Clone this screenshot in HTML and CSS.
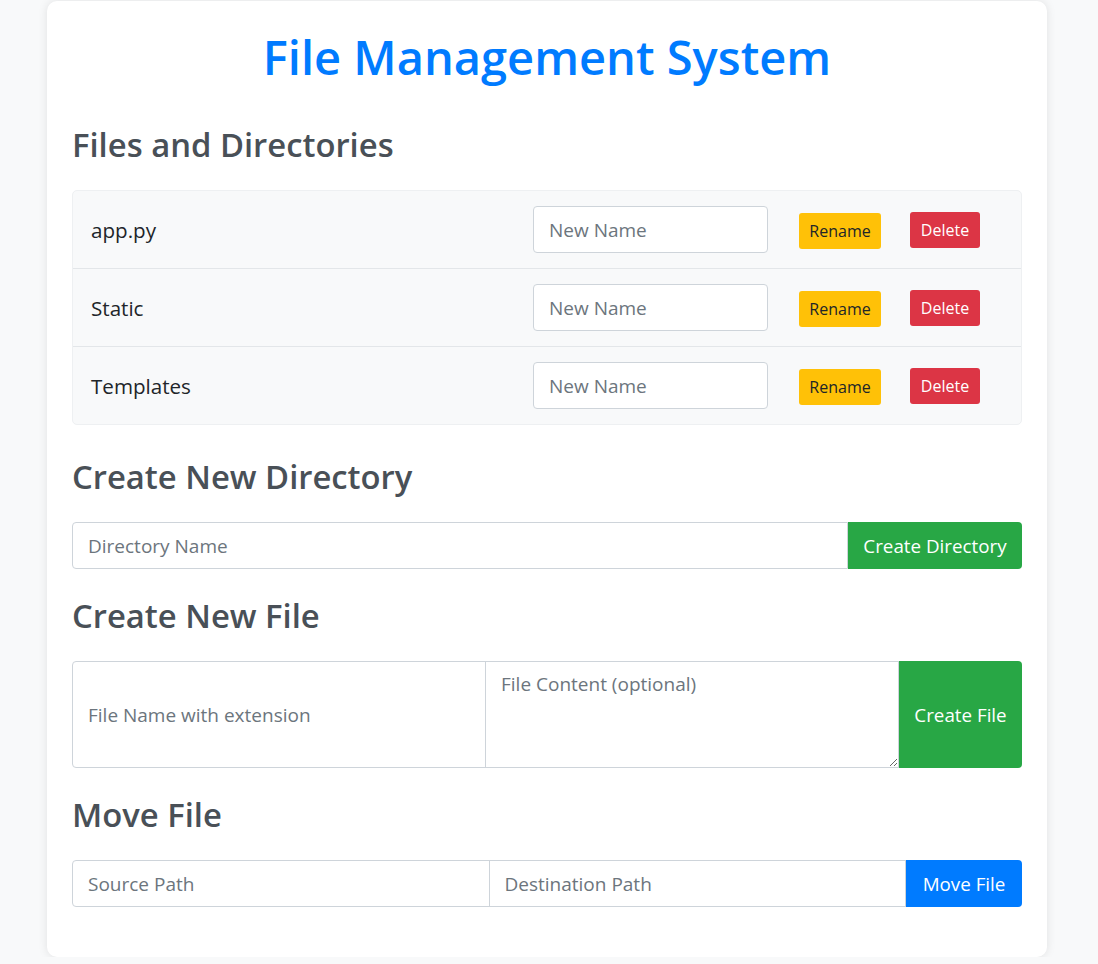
FILE: index.html
```html
<!DOCTYPE html>
<html lang="en">
<head>
<meta charset="utf-8">
<title>File Management System</title>
<link rel="stylesheet" href="styles.css">
</head>
<body>
<main class="card">
  <h1 class="title">File Management System</h1>

  <section class="section section-files">
    <h2 class="section-title">Files and Directories</h2>
    <ul class="file-list">
      <li class="file-row">
        <span class="file-name">app.py</span>
        <form class="rename-form">
          <input class="field field-rename" type="text" placeholder="New Name">
          <button type="button" class="btn btn-sm btn-warning">Rename</button>
        </form>
        <button type="button" class="btn btn-sm btn-danger">Delete</button>
      </li>
      <li class="file-row">
        <span class="file-name">Static</span>
        <form class="rename-form">
          <input class="field field-rename" type="text" placeholder="New Name">
          <button type="button" class="btn btn-sm btn-warning">Rename</button>
        </form>
        <button type="button" class="btn btn-sm btn-danger">Delete</button>
      </li>
      <li class="file-row">
        <span class="file-name">Templates</span>
        <form class="rename-form">
          <input class="field field-rename" type="text" placeholder="New Name">
          <button type="button" class="btn btn-sm btn-warning">Rename</button>
        </form>
        <button type="button" class="btn btn-sm btn-danger">Delete</button>
      </li>
    </ul>
  </section>

  <section class="section section-dir">
    <h2 class="section-title">Create New Directory</h2>
    <form class="input-group">
      <input class="field field-grow" type="text" placeholder="Directory Name">
      <button type="button" class="btn btn-success btn-dir">Create Directory</button>
    </form>
  </section>

  <section class="section">
    <h2 class="section-title">Create New File</h2>
    <form class="input-group input-group-tall">
      <input class="field field-grow" type="text" placeholder="File Name with extension">
      <textarea class="field field-grow field-area" placeholder="File Content (optional)"></textarea>
      <button type="button" class="btn btn-success btn-file">Create File</button>
    </form>
  </section>

  <section class="section">
    <h2 class="section-title">Move File</h2>
    <form class="input-group">
      <input class="field field-grow" type="text" placeholder="Source Path">
      <input class="field field-grow" type="text" placeholder="Destination Path">
      <button type="button" class="btn btn-primary btn-move">Move File</button>
    </form>
  </section>
</main>
</body>
</html>
```

FILE: styles.css
```css
* {
  box-sizing: border-box;
}

html, body {
  margin: 0;
  padding: 0;
}

body {
  background: #f8f9fa;
  font-family: "Open Sans", "Noto Sans", sans-serif;
  color: #212529;
  padding: 1px 4px 0 0;
}

.card {
  width: 1000px;
  margin: 0 auto;
  background: #fff;
  border-radius: 10px;
  box-shadow: 0 0 10px rgba(0, 0, 0, 0.1);
  padding: 27px 25px 50px;
}

.title {
  margin: 0;
  text-align: center;
  color: #007bff;
  font-size: 47px;
  line-height: 58px;
  font-weight: 600;
}

.section-title {
  margin: 0 0 26px;
  color: #495057;
  font-size: 32.8px;
  line-height: 38px;
  font-weight: 600;
}

.section {
  margin-top: 28px;
}

.section-files {
  margin-top: 40px;
}

.section-dir {
  margin-top: 33px;
}

.file-list {
  list-style: none;
  margin: 0;
  padding: 0;
  background: #f8f9fa;
  border: 1px solid #eef0f2;
  border-radius: 5px;
}

.file-row {
  display: flex;
  align-items: center;
  height: 78px;
  padding: 0 41px 0 18px;
  border-bottom: 1px solid #e3e6e9;
}

.file-row:last-child {
  border-bottom: 0;
  height: 77px;
}

.file-name {
  flex: 1;
  font-size: 20.6px;
}

.rename-form {
  display: flex;
  align-items: center;
}

.field {
  height: 47px;
  border: 1px solid #ced4da;
  border-radius: 4px;
  padding: 0 15px;
  font-family: inherit;
  font-size: 19px;
  color: #495057;
  background: #fff;
  outline: none;
}

.field::placeholder {
  color: #6c757d;
  opacity: 1;
}

.field-rename {
  width: 235px;
}

.btn {
  border: 0;
  font-family: inherit;
  cursor: pointer;
  display: flex;
  align-items: center;
  justify-content: center;
}

.btn-sm {
  height: 36px;
  font-size: 16px;
  border-radius: 3px;
  padding: 0 6px;
}

.btn-warning {
  background: #ffc107;
  color: #212529;
  width: 82px;
  margin-left: 31px;
  margin-top: 2px;
}

.btn-danger {
  background: #dc3545;
  color: #fff;
  width: 70px;
  margin-left: 29px;
}

.input-group {
  display: flex;
  height: 47px;
  margin: 0;
}

.input-group-tall {
  height: 107px;
}

.input-group .field {
  height: 100%;
  border-radius: 0;
  min-width: 0;
}

.input-group .field:first-child {
  border-radius: 4px 0 0 4px;
}

.input-group .field + .field {
  margin-left: -1px;
}

.field-grow {
  flex: 1;
}

.field-area {
  resize: vertical;
  padding-top: 8px;
  line-height: 1.5;
}

.btn-success,
.btn-primary {
  color: #fff;
  font-size: 18.8px;
  border-radius: 0 4px 4px 0;
  height: 100%;
  padding: 0;
}

.btn-success {
  background: #28a745;
}

.btn-primary {
  background: #007bff;
}

.btn-dir {
  width: 174px;
}

.btn-file {
  width: 123px;
}

.btn-move {
  width: 116px;
}
```
